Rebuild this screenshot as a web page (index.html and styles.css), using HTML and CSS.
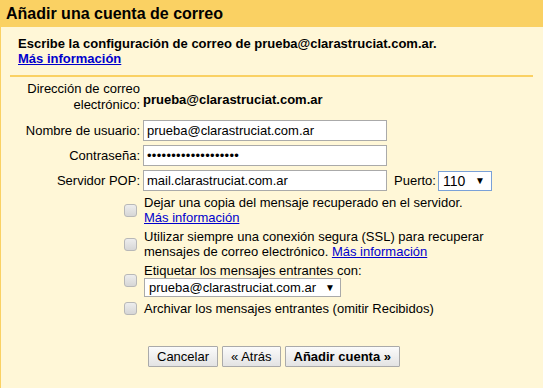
FILE: index.html
```html
<!DOCTYPE html>
<html lang="es">

<head>
    <meta charset="UTF-8">
    <meta name="viewport" content="width=device-width, initial-scale=1.0">
    <link rel="stylesheet" href="styles.css">
    <title>Añadir una cuenta de correo</title>
</head>

<body>
    <div class="page">
        <h1 class="title">Añadir una cuenta de correo</h1>
        <div class="intro">
            <p>Escribe la configuración de correo de prueba@clarastruciat.com.ar.</p>
            <a href="#">Más información</a>
        </div>
        <div class="form">
            <div class="row first">
                <label class="label two">Dirección de correo<br>electrónico:</label>
                <span class="email">prueba@clarastruciat.com.ar</span>
            </div>
            <div class="row">
                <label class="label">Nombre de usuario:</label>
                <input class="field" type="text" value="prueba@clarastruciat.com.ar">
            </div>
            <div class="row">
                <label class="label">Contraseña:</label>
                <input class="field pass" type="password" value="xxxxxxxxxxxxxxxxxxx">
            </div>
            <div class="row">
                <label class="label">Servidor POP:</label>
                <input class="field" type="text" value="mail.clarastruciat.com.ar">
                <span class="port-label">Puerto:</span>
                <span class="select port">110<i>▼</i></span>
            </div>

            <div class="check first-check">
                <span class="box"></span>
                <div class="text">Dejar una copia del mensaje recuperado en el servidor.<br><a href="#">Más información</a></div>
            </div>
            <div class="check">
                <span class="box"></span>
                <div class="text">Utilizar siempre una conexión segura (SSL) para recuperar<br>mensajes de correo electrónico. <a href="#">Más información</a></div>
            </div>
            <div class="check">
                <span class="box"></span>
                <div class="text">Etiquetar los mensajes entrantes con:
                    <div class="select label-select">prueba@clarastruciat.com.ar<i>▼</i></div>
                </div>
            </div>
            <div class="check">
                <span class="box"></span>
                <div class="text">Archivar los mensajes entrantes (omitir Recibidos)</div>
            </div>

            <div class="buttons">
                <button>Cancelar</button>
                <button>« Atrás</button>
                <button class="main">Añadir cuenta »</button>
            </div>
        </div>
    </div>
</body>

</html>
```

FILE: styles.css
```css
* {
    margin: 0;
    padding: 0;
    box-sizing: border-box;
}

html,
body {
    height: 100%;
}

body {
    background-color: #fff7d7;
    font-family: "Liberation Sans", Arial, sans-serif;
    font-size: 13px;
    color: #000;
}

a {
    color: #00c;
}

.page {
    min-height: 100%;
    border-left: 1px solid #fad163;
}

.title {
    height: 27px;
    background-color: #fad163;
    font-size: 16px;
    font-weight: bold;
    padding: 5px 0 0 5px;
}

.intro {
    margin: 0 10px 0 9px;
    padding: 9px 0 9px 8px;
    border-bottom: 2px solid #fad163;
    font-weight: bold;
    line-height: 15px;
}

.form {
    padding-top: 4px;
}

.row {
    display: flex;
    align-items: center;
    margin-bottom: 4px;
}

.row.first {
    margin-bottom: 7px;
}

.label {
    width: 142px;
    padding-right: 3px;
    text-align: right;
    line-height: 16px;
}

.email {
    font-weight: bold;
    padding-top: 4px;
}

.field {
    width: 244px;
    height: 21px;
    border: 1px solid #aaa;
    background: #fff;
    padding: 0 3px;
    font-family: inherit;
    font-size: 13px;
}

.pass {
    letter-spacing: 0.3px;
}

.port-label {
    margin: 0 2px 0 7px;
}

.select {
    display: inline-flex;
    align-items: center;
    justify-content: space-between;
    background: #fff;
    border: 1px solid #aaa;
    height: 20px;
    padding: 0 6px 0 4px;
}

.select i {
    font-style: normal;
    font-size: 10px;
}

.port {
    width: 54px;
    border-color: #7aa1d8;
    font-size: 14px;
}

.check {
    display: flex;
    align-items: center;
    margin-left: 123px;
    margin-top: 4px;
    line-height: 15px;
}

.check.first-check {
    margin-top: 0;
}

.box {
    width: 13px;
    height: 13px;
    border: 1px solid #b8b8b8;
    border-radius: 3px;
    background: linear-gradient(#ededed, #d6d6d6);
    margin-right: 7px;
    flex-shrink: 0;
}

.label-select {
    display: flex;
    width: 197px;
    height: 19px;
    padding-right: 5px;
}

.buttons {
    display: flex;
    gap: 4px;
    margin: 30px 0 0 147px;
}

button {
    height: 21px;
    padding: 0 8px;
    font-family: inherit;
    font-size: 13px;
    border: 1px solid #aaa;
    border-radius: 1px;
    background: linear-gradient(#fbfbfb, #e3e3e3);
}

button.main {
    font-weight: bold;
}
```
